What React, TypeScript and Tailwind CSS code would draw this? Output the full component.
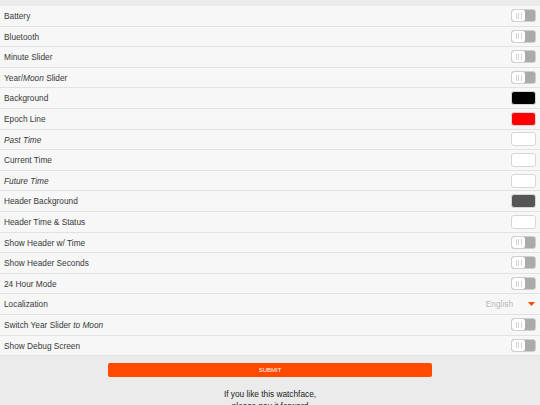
import React from "react";

type Row =
  | { label: React.ReactNode; kind: "toggle" }
  | { label: React.ReactNode; kind: "color"; color: string }
  | { label: React.ReactNode; kind: "select"; value: string };

const rows: Row[] = [
  { label: "Battery", kind: "toggle" },
  { label: "Bluetooth", kind: "toggle" },
  { label: "Minute Slider", kind: "toggle" },
  { label: <>Year/<i>Moon</i> Slider</>, kind: "toggle" },
  { label: "Background", kind: "color", color: "#000000" },
  { label: "Epoch Line", kind: "color", color: "#ff0000" },
  { label: <i>Past Time</i>, kind: "color", color: "#ffffff" },
  { label: "Current Time", kind: "color", color: "#ffffff" },
  { label: <i>Future Time</i>, kind: "color", color: "#ffffff" },
  { label: "Header Background", kind: "color", color: "#555555" },
  { label: "Header Time & Status", kind: "color", color: "#ffffff" },
  { label: "Show Header w/ Time", kind: "toggle" },
  { label: "Show Header Seconds", kind: "toggle" },
  { label: "24 Hour Mode", kind: "toggle" },
  { label: "Localization", kind: "select", value: "English" },
  { label: <>Switch Year Slider <i>to Moon</i></>, kind: "toggle" },
  { label: "Show Debug Screen", kind: "toggle" },
];

function Toggle() {
  return (
    <div className="flex h-[13px] w-[25px] overflow-hidden rounded-[3px] border border-[#cfcfcf] bg-[#aaaaaa]">
      <div className="flex h-full w-[13px] items-center justify-center gap-[1.5px] rounded-[2px] bg-white">
        <span className="h-[6px] w-px bg-[#d4d4d4]" />
        <span className="h-[6px] w-px bg-[#d4d4d4]" />
        <span className="h-[6px] w-px bg-[#d4d4d4]" />
      </div>
    </div>
  );
}

function Swatch({ color }: { color: string }) {
  return (
    <div
      className="h-[14px] w-[25px] rounded-[3px] border border-[#d6d6d6]"
      style={{ backgroundColor: color }}
    />
  );
}

export default function App() {
  return (
    <div className="h-[405px] w-[540px] overflow-hidden bg-[#ebebeb] font-['Liberation_Sans',Arial,sans-serif] text-[#383838]">
      <div className="h-[6px]" />
      <div className="bg-[#f7f7f7]">
        {rows.map((r, i) => (
          <div
            key={i}
            className="flex h-[20.6px] items-center justify-between border-b border-[#e2e2e2] pl-[4px] pr-[4px] text-[8.3px]"
          >
            <span className="pt-[1px]">{r.label}</span>
            {r.kind === "toggle" && <Toggle />}
            {r.kind === "color" && <Swatch color={r.color} />}
            {r.kind === "select" && (
              <div className="flex items-center">
                <span className="pt-[1px] text-[#b8b8b8]">{r.value}</span>
                <svg width="7" height="4" viewBox="0 0 7 4" className="ml-[15px] mr-[1px]">
                  <path d="M0 0h7L3.5 4z" fill="#ff4a00" />
                </svg>
              </div>
            )}
          </div>
        ))}
      </div>
      <div className="flex flex-col items-center pt-[7px]">
        <button className="h-[14px] w-[324px] rounded-[2px] bg-[#ff4a00] text-[6px] leading-[14px] text-white">
          SUBMIT
        </button>
        <p className="mt-[11px] text-center text-[8.3px] leading-[12px] text-[#222]">
          If you like this watchface,
          <br />
          please pay it forward
        </p>
      </div>
    </div>
  );
}
